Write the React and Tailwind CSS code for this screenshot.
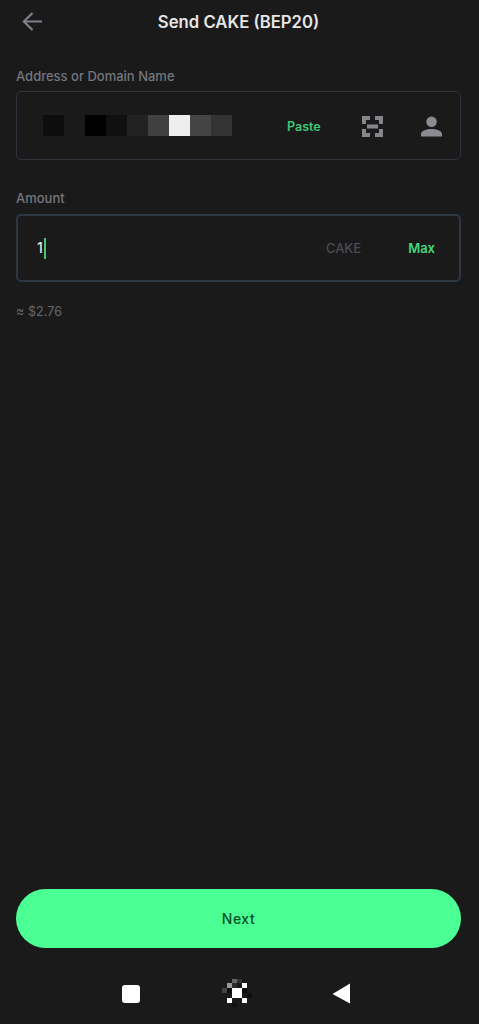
import React from 'react';

const addressPixels = ['bg-[#0d0d0d]', 'bg-[#1a1a1a]', 'bg-[#000000]', 'bg-[#101010]', 'bg-[#222222]', 'bg-[#404040]', 'bg-[#eeeeee]', 'bg-[#444444]', 'bg-[#333333]'];

function BackArrow() {
    return (
        <svg width="21" height="21" viewBox="0 0 22 22" fill="none" stroke="#7d808a" strokeWidth="2.3">
            <path d="M21 11H2.500M11 2L2 11l9 9" />
        </svg>
    );
}

function ScanIcon() {
    return (
        <svg width="21" height="21" viewBox="0 0 21 21" fill="#85878d">
            <path d="M0 0h8v4H4v4H0zM13 0h8v8h-4V4h-4zM0 13h4v4h4v4H0zM17 13h4v8h-8v-4h4zM5 8.500h11v4H5z" />
        </svg>
    );
}

function PersonIcon() {
    return (
        <svg width="21" height="21" viewBox="0 0 22 21" fill="#8a8c92">
            <circle cx="11" cy="5.500" r="5.500" />
            <path d="M0 21v-2.500C0 14.500 6 13 11 13s11 1.500 11 5.500V21z" />
        </svg>
    );
}

function HomeMosaic() {
    return (
        <svg width="32" height="30" viewBox="0 0 32 30">
            <rect x="10" y="0" width="5" height="4" fill="#666" />
            <rect x="15" y="0" width="5" height="4" fill="#333" />
            <rect x="5" y="4" width="5" height="5" fill="#999" />
            <rect x="10" y="4" width="5" height="5" fill="#2c2c2c" />
            <rect x="20" y="4" width="5" height="5" fill="#fff" />
            <rect x="0" y="9" width="5" height="5" fill="#444" />
            <rect x="5" y="9" width="5" height="5" fill="#0c0c0c" />
            <rect x="10" y="9" width="10" height="10" fill="#fff" />
            <rect x="20" y="9" width="5" height="5" fill="#0c0c0c" />
            <rect x="25" y="14" width="5" height="5" fill="#0f0f0f" />
            <rect x="5" y="19" width="5" height="5" fill="#fff" />
            <rect x="20" y="19" width="5" height="5" fill="#fff" />
            <rect x="10" y="24" width="5" height="4" fill="#111" />
        </svg>
    );
}

export default function App() {
    return (
        <div className="h-[1024px] w-[479px] bg-[#1a1a1a] flex flex-col pl-4 pr-[18px] font-['Inter','Noto_Sans',sans-serif] overflow-hidden">
            {/* Header */}
            <div className="h-[44px] flex items-center shrink-0">
                <div className="w-[44px] pl-[6px] -mt-[1px] flex items-center">
                    <BackArrow />
                </div>
                <h1 className="flex-1 text-center pr-[44px] text-[16.7px] font-semibold text-[#e6e6e6] leading-none">Send CAKE (BEP20)</h1>
            </div>

            {/* Address */}
            <label className="mt-[24px] text-[13px] leading-[16px] font-medium text-[#74767e]">Address or Domain Name</label>
            <div className="mt-[7px] h-[69px] border border-[#2d333c] rounded-[5px] flex items-center pl-[26px]">
                <div className="flex">
                    {addressPixels.map((c, i) => (
                        <div key={i} className={`w-[21px] h-[21px] ${c}`} />
                    ))}
                </div>
                <span className="ml-[55px] pt-[3px] text-[12.5px] font-semibold text-[#41c875]">Paste</span>
                <div className="ml-[41px] pt-[1px] flex items-center">
                    <ScanIcon />
                </div>
                <div className="ml-[38px] pt-[1px] flex items-center">
                    <PersonIcon />
                </div>
            </div>

            {/* Amount */}
            <label className="mt-[30px] text-[13px] leading-[16px] font-medium text-[#74767e]">Amount</label>
            <div className="mt-[8px] h-[68px] border-2 border-[#2e3640] rounded-[5px] flex items-center pl-[19px] pr-[24px]">
                <span className="text-[14px] font-medium text-[#e6e6e6] leading-none">1</span>
                <span className="w-[2px] h-[21px] bg-[#41c875] ml-[1px]" />
                <span className="ml-auto pt-[1px] text-[13px] font-medium text-[#4a4c55]">CAKE</span>
                <span className="ml-[47px] pt-[1px] text-[13px] font-semibold text-[#46d67f]">Max</span>
            </div>
            <p className="mt-[22px] text-[12.5px] leading-[16px] tracking-[0.1px] text-[#65676f]">≈ $2.76</p>

            {/* Next */}
            <button className="mt-auto h-[59px] w-full rounded-full bg-[#4bff94] text-[14px] font-medium tracking-[0.5px] text-[#0b4f25]">Next</button>

            {/* Android nav */}
            <div className="mt-[31px] h-[45px] shrink-0 -ml-4 flex items-start">
                <div className="ml-[122px] mt-[6px] w-[18px] h-[18px] rounded-[3px] bg-white" />
                <div className="ml-[82px]">
                    <HomeMosaic />
                </div>
                <div className="ml-[78px] mt-[4px]">
                    <svg width="19" height="21" viewBox="0 0 19 21" fill="#ffffff">
                        <path d="M18 0.500V20.500L0.500 11z" />
                    </svg>
                </div>
            </div>
        </div>
    );
}
